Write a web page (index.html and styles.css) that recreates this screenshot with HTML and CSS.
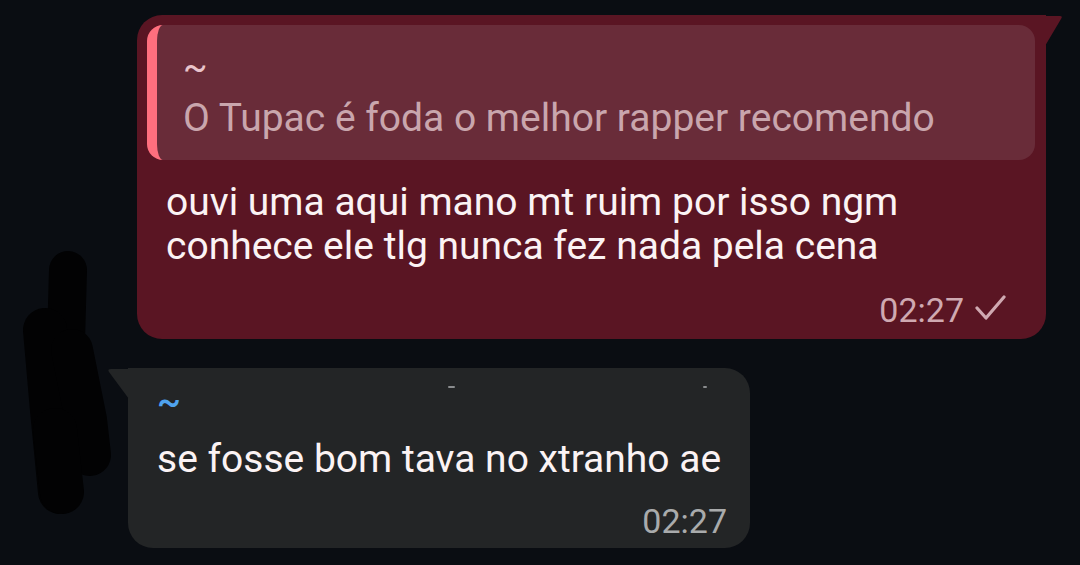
FILE: index.html
```html
<!DOCTYPE html>
<html lang="pt">
<head>
<meta charset="utf-8">
<link rel="stylesheet" href="styles.css">
</head>
<body>
<div class="chat">
  <div class="row row-out">
    <div class="bubble bubble-out">
      <svg class="tail tail-out" width="20" height="32" viewBox="0 0 20 32"><path d="M0 1 L15 1 Q18 1 16 4 L0 31 Z" fill="#5a1523"/></svg>
      <div class="quote">
        <div class="quote-name">~</div>
        <div class="quote-text">O Tupac é foda o melhor rapper recomendo</div>
      </div>
      <div class="msg">ouvi uma aqui mano mt ruim por isso ngm<br>conhece ele tlg nunca fez nada pela cena</div>
      <div class="meta meta-out"><span>02:27</span><svg class="check" width="32" height="28" viewBox="0 0 32 28"><path d="M3 14 L12 24 L30 3" fill="none" stroke="#cfa9b1" stroke-width="3.2" stroke-linecap="round" stroke-linejoin="round"/></svg></div>
    </div>
  </div>
  <div class="row row-in">
    <div class="bubble bubble-in">
      <svg class="tail tail-in" width="22" height="32" viewBox="0 0 22 32"><path d="M22 1 L4 1 Q0 1 2 4 L22 31 Z" fill="#232526"/></svg>
      <div class="in-name">~</div>
      <div class="msg">se fosse bom tava no xtranho ae</div>
      <div class="meta meta-in"><span>02:27</span></div>
      <span class="speck speck-a"></span>
      <span class="speck speck-b"></span>
    </div>
  </div>
  <svg class="scribble" width="120" height="290" viewBox="0 0 120 290">
    <g stroke="#020203" stroke-linecap="round" fill="none">
      <path d="M68 40 L66 110" stroke-width="38"/>
      <path d="M45 100 L52 180 L60 262" stroke-width="44"/>
      <path d="M72 120 L86 190 L90 225" stroke-width="42"/>
      <path d="M55 200 L62 262" stroke-width="44"/>
    </g>
  </svg>
</div>
</body>
</html>
```

FILE: styles.css
```css
html, body {
  margin: 0;
  padding: 0;
  background: #0a0d12;
}

body {
  width: 1080px;
  height: 565px;
  overflow: hidden;
  font-family: Roboto, "Noto Sans", "Liberation Sans", sans-serif;
}

.chat {
  position: relative;
  padding-top: 15px;
  display: flex;
  flex-direction: column;
  gap: 29px;
}

.row {
  display: flex;
}

.row-out {
  justify-content: flex-end;
  padding-right: 34px;
}

.row-in {
  justify-content: flex-start;
  padding-left: 128px;
}

.bubble {
  position: relative;
  box-sizing: border-box;
}

.bubble-out {
  width: 909px;
  background: #5a1523;
  border-radius: 25px 0 25px 25px;
  padding: 10px 11px 9px 10px;
}

.bubble-in {
  width: 622px;
  background: #232526;
  border-radius: 0 25px 25px 25px;
  padding: 16px 23px 7px 29px;
}

.tail {
  position: absolute;
  top: 0;
}

.tail-out {
  right: -19px;
}

.tail-in {
  left: -21px;
}

.quote {
  background: #692c39;
  border-radius: 16px;
  border-left: 10px solid #ff6f7e;
  padding: 24px 20px 21px 26px;
}

.quote-name {
  color: #e9c4cb;
  font-size: 36px;
  line-height: 36px;
  height: 48px;
}

.quote-text {
  color: #c9a6ad;
  font-size: 39px;
  line-height: 42px;
  white-space: nowrap;
}

.msg {
  color: #fbf3f4;
  font-size: 39px;
  line-height: 44px;
  white-space: nowrap;
}

.bubble-out .msg {
  margin-top: 20px;
  padding-left: 19px;
}

.bubble-in .msg {
  margin-top: 17px;
}

.meta {
  display: flex;
  justify-content: flex-end;
  align-items: center;
  font-size: 34px;
  line-height: 40px;
}

.meta-out {
  margin-top: 22px;
  padding-right: 29px;
  color: #cfa9b1;
  gap: 10px;
}

.meta-in {
  margin-top: 20px;
  color: #a9abac;
}

.check {
  display: block;
  margin-top: -4px;
}

.in-name {
  color: #4fa3ee;
  font-size: 36px;
  line-height: 36px;
  height: 36px;
  font-weight: 500;
}

.speck {
  position: absolute;
  height: 2px;
  background: #8a8c8e;
  border-radius: 1px;
  top: 18px;
}

.speck-a {
  left: 320px;
  width: 7px;
}

.speck-b {
  left: 575px;
  width: 4px;
}

.scribble {
  position: absolute;
  left: 0;
  top: 230px;
}
```
